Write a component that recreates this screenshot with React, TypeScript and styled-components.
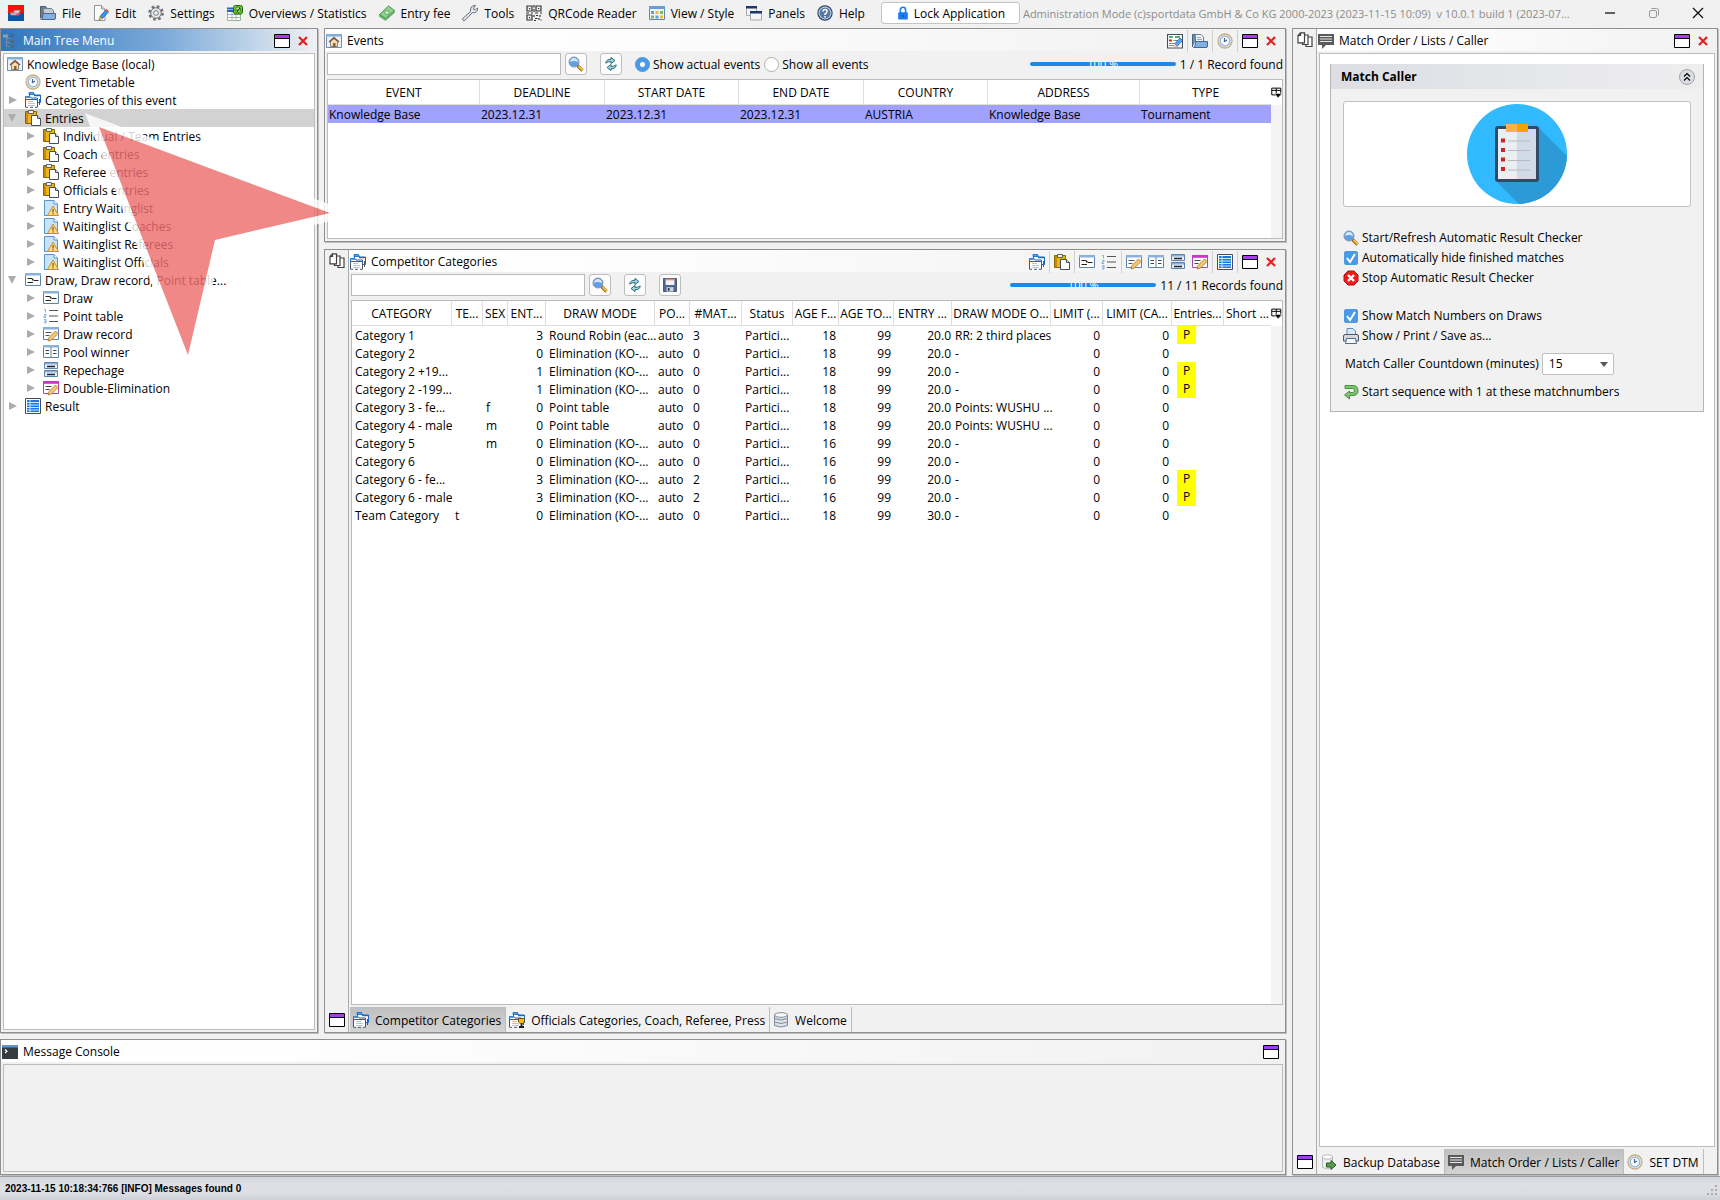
import React from "react";
import styled, { createGlobalStyle, css } from "styled-components";

const GlobalStyle = createGlobalStyle`
  * { box-sizing: border-box; }
  body { margin: 0; background: #f1f1f1; }
  body, button, input, select, table {
    font-family: "Open Sans", "Noto Sans", sans-serif;
    font-size: 12px;
    line-height: 18px;
    color: #000;
  }
  button { border: 0; padding: 0; background: none; text-align: left; white-space: nowrap; }
`;

/* ---------- icons ---------- */

const folderPair = (
  <>
    <path d="M4.500 4V1.500h3.500l1 1.500h6.500v7.500h-2.500" fill="#fff" stroke="#1b66c0" />
    <path d="M4 .5h4.500l1 2H4z" fill="#42a5f5" stroke="#1565c0" strokeWidth=".8" />
    <path d="M9 3h7v1.200H9z" fill="#1565c0" />
    <path d="M.5 15V7.500h12V15" fill="#fff" stroke="#46566c" />
    <path d="M.5 7.500V4.500H5l1 1.500h6.500v1.500z" fill="#fff" stroke="#1565c0" />
    <path d="M.5 4.500H5l1 1.500H.5z" fill="#42a5f5" />
    <path d="M3 9.500h5M3 11.500h7M3 13.500h7" stroke="#b8c4d6" />
    <path d="M.5 15.300h2.500M5 15.300h3M10 15.300h2.500" stroke="#46566c" />
    <path d="M14.500 7v6" stroke="#46566c" />
  </>
);

const drawings: Record<string, React.ReactNode> = {
  logo: (<><rect width="16" height="8" fill="#fb1008" /><rect y="8" width="16" height="8" fill="#0a55a8" /><path d="M1.500 8.500L4 6.500h1.500L6.500 5H13l-2 3 2 .5-3 2H3z" fill="#a9707a" /><path d="M6.500 5.500H12l-1.500 2.500H6zM3 8.500h6l-1 1.200H3z" fill="#dbc4c4" /></>),
  file: (<><path d="M.5 13.500V1.500h5l1.500 2h4v4" fill="#6f7c8b" stroke="#4f5d6b" /><path d="M3.500 3.500h8l2 2v5h-10z" fill="#c3cbd4" stroke="#6f7c8b" /><path d="M.8 14.500q1.500 0 1.700-1.500l.5-4.500h12.500V13q0 1.500-1.500 1.500z" fill="#86aede" stroke="#44699a" /></>),
  edit: (<><path d="M1.500.5h7l3.500 3.500v11.500H1.500z" fill="#fff" stroke="#8f9499" /><path d="M8.500.5V4H12" fill="#ddd" stroke="#8f9499" /><path d="M7 11.500L12.500 5l2.500 2.500-5.500 6z" fill="#2f97ee" stroke="#174f96" strokeWidth=".7" /><path d="M6 15l1-3.500 2.500 2z" fill="#f2d06a" stroke="#8a5b16" strokeWidth=".6" /><path d="M12.500 5l1-1.200 2.500 2.400-1 1.300z" fill="#e0542c" /></>),
  gear: (<><circle cx="8" cy="8" r="6.500" fill="none" stroke="#6e7378" strokeWidth="2.600" strokeDasharray="2.600 2.500" /><circle cx="8" cy="8" r="5.300" fill="#e3e5e7" stroke="#6e7378" /><circle cx="8" cy="8" r="2.300" fill="#fff" stroke="#6e7378" /></>),
  overview: (<><path d="M.5 4.500h13v11H.5z" fill="#fff" stroke="#9db39a" /><path d="M1 9.500h12M1 12.500h12M5 5v10M9 5v10" stroke="#a6b6a6" /><path d="M0 2.500h6v1.500H0zM0 5h6v2H0z" fill="#2667b8" /><rect x="6.500" y=".5" width="9" height="8.500" rx="2" fill="#6fc62d" stroke="#1f6b10" /><circle cx="11" cy="4.800" r="2.800" fill="#b7ec7d" stroke="#2e7911" strokeWidth=".8" /><path d="M9.500 4.500l1.200 1.500 2.300-3" fill="none" stroke="#14470a" strokeWidth="1.200" /></>),
  money: (<><path d="M.5 9.500l9-8.500 6 4.500-9 8z" fill="#8fcf8c" stroke="#4a9a4e" /><path d="M.5 9.500v2l6 4 9-8V5.500l-9 8z" fill="#6db56c" stroke="#4a9a4e" strokeWidth=".6" /><ellipse cx="8" cy="7.500" rx="2.400" ry="1.900" fill="#cdebca" stroke="#4a9a4e" strokeWidth=".7" /></>),
  wrench: (<path d="M1 13.300L8.500 6.500Q8 2.500 10.500 1q1.500-.8 3-.4L11.500 3l.3 1.500 1.700.3 2-2q.7 2-.9 3.900-1.600 1.500-4.300 1L3 15.300q-1 .7-2-.2t0-1.800z" fill="#e3e9f2" stroke="#666c72" />),
  qr: (<><path d="M1 1h5v5H1zM10 1h5v5h-5zM1 10h5v5H1z" fill="none" stroke="#333" strokeWidth="1.200" /><path d="M3 3h1.200v1.200H3zM12 3h1.200v1.200H12zM3 12h1.200v1.200H3z" fill="#333" /><path d="M8 0v2.500M8 4v3M0 8h3M5 8h2M9 8h3M14 8h2M8 10v2M10 10.500h2M14 10v2M9 13.500h2.500M13 13v2M8 15.500h2M15 14.500v1" stroke="#333" strokeWidth="1.200" /></>),
  view: (<><path d="M.5 1.500h15v13H.5z" fill="#eef4fb" stroke="#5f87b5" /><path d="M0 1h16v3H0z" fill="#6a9bd3" /><path d="M2 6h3v3H2zM6.500 10.500h3v3h-3z" fill="#5aa0e0" /><path d="M6.500 6h3v3h-3zM11 10.500h3v3h-3z" fill="#f0b64d" /><path d="M11 6h3v3h-3zM2 10.500h3v3H2z" fill="#7fbb52" /></>),
  panels: (<><path d="M.5 1.500h10v9H.5z" fill="#f4f4f4" stroke="#aaa" /><path d="M0 1h11v2.500H0z" fill="#19396c" /><path d="M4.500 6.500h11v8.500h-11z" fill="#f4f4f4" stroke="#aaa" /><path d="M4 6h12v2.500H4z" fill="#19396c" /></>),
  help: (<><circle cx="8" cy="8" r="7.700" fill="#2b4468" /><circle cx="8" cy="8" r="6.500" fill="#d5dde8" /><circle cx="8" cy="8" r="5.500" fill="#5578aa" /><path d="M6 6.500q0-2 2-2t2 1.700T8 9v1M8 11v1.500" fill="none" stroke="#fff" strokeWidth="1.500" /></>),
  lock: (<><path d="M5 8V4.500q0-3 3-3t3 3V8" fill="none" stroke="#1a7cf0" strokeWidth="1.800" /><rect x="2.500" y="7" width="11" height="8.500" rx="1" fill="#1a7cf0" /><path d="M8 10v3" stroke="#0b3f8c" /></>),
  tree: (<><path d="M4.500 3v10.500M4.500 5.500H8M4.500 9.500H8M4.500 13.500H8" fill="none" stroke="#7d8c9c" /><path d="M1 1.500h5v3H1z" fill="#8ba0b6" /><path d="M8 1h4v3H8zM8 7h4.500v3H8zM8 12h4.500v3H8z" fill="#4a6887" /></>),
  home: (<><path d="M.5 1.500h15v13H.5z" fill="#e8f1f9" stroke="#6d8db3" /><path d="M0 1h16v2.500H0z" fill="#85add9" /><path d="M4.500 8.500v5h7v-5L8 5.500z" fill="#f3dfae" stroke="#94806c" /><path d="M3 9l5-4.300L13 9" fill="none" stroke="#7b4a38" strokeWidth="1.300" /><path d="M7 10h2.500v4H7z" fill="#8a5f32" /></>),
  clock: (<><circle cx="8" cy="8" r="7" fill="#e4e9ee" stroke="#c9ae7e" strokeWidth="1.300" /><circle cx="8" cy="8" r="4.800" fill="#f7fbff" stroke="#8fb3d6" strokeWidth="1.200" /><path d="M7.500 5v3.500L10 7" fill="none" stroke="#46658a" strokeWidth="1.200" /></>),
  folders: folderPair,
  trophyFolders: (<>{folderPair}<path d="M9.500 6.500h6v3.500l-2 1.500h-2l-2-1.500z" fill="#f3bc14" stroke="#4d3800" strokeWidth=".8" /><path d="M12.500 11.500v3M10 15h5" stroke="#1d1d1d" strokeWidth="1.800" /></>),
  paste: (<><path d="M.5 1.500h11v12H.5z" fill="#f0b21b" stroke="#8a6508" /><path d="M1 2h2v11H1z" fill="#c98a08" /><path d="M3.500.5h5v3h-5z" fill="#e9eef2" stroke="#4b5a68" strokeWidth=".9" /><path d="M6.500 5.500h6l3 3v7h-9z" fill="#fff" stroke="#434d5c" /><path d="M12.500 5.500v3h3" fill="#dfe5ec" stroke="#434d5c" /></>),
  warn: (<><path d="M1.500.5h9.500l3.500 3.500v11.500h-13z" fill="#c9e3f8" stroke="#5b94c4" /><path d="M11 .5v3.500h3.500" fill="#fff" stroke="#5b94c4" /><path d="M10 6l5.500 9.500h-11z" fill="#ffdc83" stroke="#c98d22" /><path d="M10 9v3.500M10 13.300v1.200" stroke="#7c4d00" strokeWidth="1.200" /></>),
  draw: (<><path d="M.5 1.500h15v12H.5z" fill="#fff" stroke="#5f82ab" /><path d="M0 1h16v2.500H0z" fill="#88b1e0" /><path d="M2.500 6.500H7M2.500 10.500H8M9 8.500h4.500M7.500 6.500v1.500H9" fill="none" stroke="#222" strokeWidth="1.200" /></>),
  points: (<><path d="M6 2.500h9M6 8h9M6 13.500h9" stroke="#555" strokeWidth="1.200" /><path d="M1 1.500h1.500v3M1 6.500h2v1.500H1v1.500h2M1 11.500h2v3.500H1M1 13.300h2" fill="none" stroke="#7fb0e0" /></>),
  record: (<><path d="M.5 1.500h15v12H.5z" fill="#fff" stroke="#5f82ab" /><path d="M0 1h16v2.500H0z" fill="#88b1e0" /><path d="M2.500 6.500h6M2.500 9.500h4" stroke="#555" /><path d="M5 15l1-3.500L12.500 5 15 7.500 8.500 14z" fill="#f6c671" stroke="#a1722a" strokeWidth=".8" /></>),
  double: (<><path d="M.5 1.500h15v12H.5z" fill="#fff" stroke="#a14ba8" /><path d="M0 1h16v2.800H0z" fill="#cb35cf" /><path d="M2.500 6.500h6M2.500 9.500h4" stroke="#444" /><path d="M5 15l1-3.500L12.500 5 15 7.500 8.500 14z" fill="#f6c671" stroke="#a1722a" strokeWidth=".8" /></>),
  pool: (<><path d="M.5 1.500h15v12H.5z" fill="#fff" stroke="#5f82ab" /><path d="M0 1h16v2.500H0z" fill="#88b1e0" /><path d="M8 3v10" stroke="#5f82ab" /><path d="M2.500 6.500h3.500M2.500 9.500h3.500M10 6.500h3.500M10 9.500h3.500" stroke="#444" /></>),
  repechage: (<><path d="M1.500.5h13v6h-13zM1.500 8.500h13v6h-13z" fill="#e8f0fa" stroke="#5f82ab" /><path d="M2 1h12v1.500H2zM2 9h12v1.500H2z" fill="#88b1e0" /><path d="M4 4.500h8M4 12.500h8" stroke="#222" strokeWidth="1.600" /></>),
  result: (<><path d="M.5.5h15v15H.5z" fill="#fff" stroke="#444c60" /><path d="M2 2h12v12H2z" fill="#1779e0" /><path d="M2 4.500h12M2 7h12M2 9.500h12M2 12h12M5 2v12" stroke="#cfe5fb" /></>),
  formEdit: (<><path d="M.5 1.500h15v13.500H.5z" fill="#fff" stroke="#3f4d5b" strokeWidth="1.200" /><path d="M2 4h4M8 4h5" stroke="#1e9a38" strokeWidth="1.600" /><path d="M2 7.500h3" stroke="#d22" strokeWidth="2" /><path d="M6.500 7.500h6M2 10.500h8M2 12.500h5" stroke="#7d8893" /><path d="M8 10.500L13 5l2.500 2.500-5.500 6z" fill="#58a6ee" stroke="#1e4f96" strokeWidth=".7" /><path d="M7 14l1-3.500 2 2.500z" fill="#f2b06a" /></>),
  open: (<><path d="M.5 14V1.500h4l1 2" fill="#6a8fbd" stroke="#44617f" /><path d="M3.500 1.500h5.500l2.500 2.500v6h-8z" fill="#f1f4f7" stroke="#727d88" /><path d="M5 4.500h4M5 6.500h5" stroke="#9aa5b0" /><path d="M1.500 14.500q1.300 0 1.500-1.500l.5-4.500h12V13q0 1.500-1.500 1.500z" fill="#86b0e2" stroke="#3f689c" /></>),
  chat: (<><path d="M0 1h16v11H8l-4 4v-4H0z" fill="#5a5a5a" /><path d="M2 3.500h12M2 6h12M2 8.500h12" stroke="#e8e8e8" strokeWidth="1.200" /></>),
  copy: (<g fill="#fff" stroke="#3f3f3f" strokeWidth="1.200"><path d="M9 5h6v9.500H9z" /><path d="M5.500 3H11v9.500H5.500z" /><path d="M3.500.8H7.500v10H1V3.500z" /><path d="M3.500.8V3.500H1" fill="none" /></g>),
  max: (<><path d="M.5 1.500h15v13H.5z" fill="#fff" stroke="#000" /><path d="M1 2h14v3H1z" fill="#a63df0" /><path d="M1 5.500h14" stroke="#000" /></>),
  close: (<path d="M4 4l8 8M12 4l-8 8" stroke="#ec1c1c" strokeWidth="2.200" />),
  search: (<><path d="M9.500 9.500l5 5" stroke="#8a6110" strokeWidth="3.200" /><path d="M10.500 10l4.300 4.300" stroke="#f5c04a" strokeWidth="2" /><circle cx="6" cy="6" r="5" fill="#5f9fe6" stroke="#8594b4" /><path d="M2 6Q2.500 2 6 2t4 4Q6 4 2 6z" fill="#d3e8fc" /></>),
  refresh: (<><path d="M2 7q.5-4.500 6-4.500V.5L12.500 4 8 7.500V5.300Q4.500 5 2 7z" fill="#a5d3dc" stroke="#14596e" /><path d="M14 9q-.5 4.500-6 4.500v2L3.500 12 8 8.500v2.200q3.500.3 6-1.700z" fill="#a5d3dc" stroke="#14596e" /></>),
  save: (<><path d="M.5.5h15v15H.5z" fill="#4a6799" stroke="#3a4a68" /><path d="M3 1h10v7H3z" fill="#f3f1f1" /><path d="M3 1.800h10" stroke="#e08a7c" strokeWidth="1.600" /><path d="M4 10.500h8v5H4z" fill="#ccd2da" /><path d="M5.500 11.500h2v3h-2z" fill="#222f48" /></>),
  db: (<><path d="M1.500 3v10.500q6.500 3 13 0V3" fill="#dde3e9" stroke="#818a95" /><ellipse cx="8" cy="3" rx="6.500" ry="2.300" fill="#f6f8fa" stroke="#818a95" /><path d="M1.500 6.500q6.500 3 13 0M1.500 10q6.500 3 13 0" fill="none" stroke="#818a95" /></>),
  backup: (<><path d="M1.500 3v10.500q5 3 10 0V3" fill="#eceeef" stroke="#b5babf" /><ellipse cx="6.500" cy="3" rx="5" ry="2.200" fill="#fafafa" stroke="#b5babf" /><path d="M5.500 9h4.500V6.500l5 4.500-5 4.500V13H5.500z" fill="#5f9a55" stroke="#1f5d16" /></>),
  console: (<><path d="M0 1h16v14H0z" fill="#363b41" /><path d="M0 1h16v2.500H0z" fill="#5e93d2" /><path d="M3 5.500l2 1.700L3 9" fill="none" stroke="#fff" strokeWidth="1.200" /></>),
  stop: (<><path d="M5 1h6l4 4v6l-4 4H5l-4-4V5z" fill="#f01c1c" stroke="#b80e0e" /><path d="M5 5l6 6M11 5l-6 6" stroke="#fff" strokeWidth="2.400" /></>),
  print: (<><path d="M4 7V.5h6l2.500 2.500v4" fill="#d5e9fa" stroke="#5f8fbd" /><path d="M.5 13V8q0-1.500 1.500-1.500h12q1.500 0 1.500 1.500v5z" fill="#d4d8dc" stroke="#4f5a66" /><path d="M3.500 10.500h9l1 5h-11z" fill="#f5fafe" stroke="#4f6d8c" /></>),
  back: (<path d="M2 1.500h8q5 0 5 5t-5 5H6.500v3.500L1.500 11l5-4v1.500h3q2 0 2-2t-2-2H2z" fill="#7cc270" stroke="#3d8a36" strokeWidth=".9" />),
  columns: (<><path d="M1 1.500h12v9H1zM1 4.500h12M7 1.500v9" fill="none" stroke="#000" strokeWidth="1.300" /><path d="M4.500 8.500h10L9.500 14.500z" fill="#000" stroke="#fff" strokeWidth=".8" /></>),
  collapse: (<><circle cx="8" cy="8" r="7.500" fill="#dcdde3" stroke="#a2a3a8" /><path d="M5 7.500l3-3 3 3M5 11.500l3-3 3 3" fill="none" stroke="#000" strokeWidth="1.200" /></>),
  minimize: (<path d="M3 8h10" stroke="#000" strokeWidth="1.200" />),
  restore: (<><rect x="3.500" y="5.500" width="7" height="7" rx="1.500" fill="none" stroke="#999" /><path d="M5.500 3.500h5q2 0 2 2v5" fill="none" stroke="#999" /></>),
  quit: (<path d="M3 3l10 10M13 3L3 13" stroke="#111" strokeWidth="1.300" />),
};

const Glyph = styled.svg<{ $size?: number }>`
  width: ${(p) => p.$size ?? 16}px;
  height: ${(p) => p.$size ?? 16}px;
  flex: none;
  display: block;
`;

const Icon = ({ name, size }: { name: string; size?: number }) => (
  <Glyph $size={size} viewBox="0 0 16 16" aria-hidden="true">{drawings[name]}</Glyph>
);

const Label = styled.span`
  padding-top: 2px;
  white-space: nowrap;
`;

/* ---------- frame ---------- */

const Window = styled.div`
  position: relative;
  min-height: 100vh;
  display: flex;
  flex-direction: column;
  overflow: hidden;
`;

const MenuBar = styled.header`
  display: flex;
  align-items: center;
  height: 28px;
  padding: 0 8px 2px;
  gap: 12px;
`;

const Menus = styled.nav`
  display: flex;
  gap: 12px;
  padding: 0 4px;
`;

const MenuButton = styled.button`
  display: flex;
  align-items: center;
  gap: 6px;
`;

const LockButton = styled.button`
  display: flex;
  align-items: center;
  justify-content: center;
  flex: none;
  gap: 4px;
  width: 139px;
  height: 22px;
  background: #fff;
  border: 1px solid #c4c4c4;
  border-radius: 3px;
`;

const WindowInfo = styled.div`
  flex: 1;
  min-width: 0;
  margin-left: -9px;
  padding-top: 2px;
  color: #8c8c8c;
  font-size: 11px;
  white-space: nowrap;
  overflow: hidden;
`;

const WindowButtons = styled.div`
  display: flex;
  gap: 28px;
  padding-right: 6px;
`;

const Desk = styled.main`
  flex: 1;
  display: flex;
  gap: 6px;
  padding-right: 2px;
`;

const Stack = styled.div<{ $gap: number }>`
  flex: 1;
  min-width: 0;
  display: flex;
  flex-direction: column;
  gap: ${(p) => p.$gap}px;
`;

const Split = styled.div`
  flex: 1;
  display: flex;
  gap: 6px;
`;

const Panel = styled.section<{ $width?: number; $height?: number }>`
  display: flex;
  min-width: 0;
  ${(p) => (p.$width ? css`flex: none; width: ${p.$width}px;` : "")}
  ${(p) => (p.$height ? css`flex: none; height: ${p.$height}px;` : css`flex-grow: 1;`)}
  ${(p) => (p.$width ? css`flex-grow: 0;` : "")}
  border: 1px solid #8f8f8f;
  box-shadow: 1px 1px 0 #bdbdbd;
  background: #f1f1f1;
`;

const PanelMain = styled.div`
  flex: 1;
  min-width: 0;
  display: flex;
  flex-direction: column;
`;

const SideStrip = styled.div`
  flex: none;
  width: 24px;
  display: flex;
  flex-direction: column;
  align-items: center;
  justify-content: space-between;
  padding: 3px 0 4px;
  border-right: 1px solid #ababab;
`;

const TitleBar = styled.div<{ $active?: boolean }>`
  flex: none;
  display: flex;
  align-items: center;
  height: 22px;
  padding: 1px 6px 0 1px;
  color: ${(p) => (p.$active ? "#fff" : "#000")};
  background: ${(p) =>
    p.$active
      ? "linear-gradient(90deg, #2f76bd, #79a8d8 50%, #f0f1f4)"
      : "linear-gradient(90deg, #fff, #fdfdfd 30%, #f1f1f1)"};
`;

const Title = styled.h2`
  flex: 1;
  margin: 0 0 0 5px;
  padding-top: 1px;
  font-size: 12px;
  font-weight: 400;
`;

const Tools = styled.div<{ $gap?: number }>`
  display: flex;
  align-items: center;
  gap: ${(p) => p.$gap ?? 4}px;
`;

const Divider = styled.span`
  width: 1px;
  height: 22px;
  background: #cfcfcf;
`;

const Frame = styled.div<{ $fill?: string }>`
  flex: 1;
  margin: 2px;
  border: 1px solid #bcbcbc;
  background: ${(p) => p.$fill ?? "#fff"};
`;

const WindowTools = () => (
  <Tools $gap={5}>
    <button aria-label="Maximize"><Icon name="max" /></button>
    <button aria-label="Close"><Icon name="close" /></button>
  </Tools>
);

/* ---------- tree ---------- */

const TreeList = styled.ul`
  list-style: none;
  margin: 0;
  padding: 1px 0;
`;

const TreeRow = styled.li<{ $selected?: boolean }>`
  background: ${(p) => (p.$selected ? "#d2d2d2" : "transparent")};
`;

const TreeButton = styled.button<{ $level: number }>`
  display: flex;
  align-items: center;
  width: 100%;
  height: 18px;
  gap: 4px;
  padding-left: ${(p) => [3, 3, 21][p.$level]}px;
`;

const Twisty = styled.span<{ $state: "open" | "closed" | "none" }>`
  width: 14px;
  display: flex;
  padding-left: ${(p) => (p.$state === "closed" ? 2 : 1)}px;
  &::before {
    content: "";
    border: 4px solid transparent;
    ${(p) => p.$state === "closed" && css`border-left: 8px solid #acacac; border-right: 0;`}
    ${(p) => p.$state === "open" && css`border-top: 8px solid #acacac; border-bottom: 0;`}
  }
`;

type Node = { text: string; icon: string; level: number; state: "open" | "closed" | "none" };
const n = (text: string, icon: string, level: number, state: Node["state"] = "closed"): Node => ({ text, icon, level, state });
const nodes: Node[] = [
  n("Knowledge Base (local)", "home", 0, "none"),
  n("Event Timetable", "clock", 1, "none"),
  n("Categories of this event", "folders", 1),
  n("Entries", "paste", 1, "open"),
  n("Individual / Team Entries", "paste", 2),
  n("Coach entries", "paste", 2),
  n("Referee entries", "paste", 2),
  n("Officials entries", "paste", 2),
  n("Entry Waitinglist", "warn", 2),
  n("Waitinglist Coaches", "warn", 2),
  n("Waitinglist Referees", "warn", 2),
  n("Waitinglist Officials", "warn", 2),
  n("Draw, Draw record, Point table...", "draw", 1, "open"),
  n("Draw", "draw", 2),
  n("Point table", "points", 2),
  n("Draw record", "record", 2),
  n("Pool winner", "pool", 2),
  n("Repechage", "repechage", 2),
  n("Double-Elimination", "double", 2),
  n("Result", "result", 1),
];

const Pointer = styled.svg`
  position: absolute;
  left: 70px;
  top: 100px;
  width: 300px;
  height: 300px;
  pointer-events: none;
`;

/* ---------- search bars and tables ---------- */

const SearchBar = styled.div`
  flex: none;
  display: flex;
  align-items: center;
  height: 28px;
  padding: 0 2px 2px;
`;

const SearchInput = styled.input`
  width: 234px;
  height: 22px;
  margin-right: 4px;
  border: 1px solid #b9b9b9;
  background: #fff;
`;

const ToolButton = styled.button`
  display: flex;
  align-items: center;
  justify-content: center;
  width: 22px;
  height: 22px;
  margin-right: 13px;
  background: #fcfcfc;
  border: 1px solid #bdbdbd;
  border-radius: 3px;
`;

const RadioLabel = styled.label`
  display: flex;
  align-items: center;
  gap: 3px;
  margin-right: 4px;
  white-space: nowrap;
`;

const Radio = styled.input`
  appearance: none;
  width: 15px;
  height: 15px;
  margin: 0;
  border: 1px solid #b0b0b0;
  border-radius: 50%;
  background: #fff;
  &:checked { border: 5px solid #4b9ae6; }
`;

const Progress = styled.div`
  width: 146px;
  height: 4px;
  margin: 0 4px 0 auto;
  overflow: hidden;
  border-radius: 2px;
  background: #1e88e5;
  color: #fff;
  font-size: 11px;
  line-height: 4px;
  text-align: center;
`;

const Grid = styled(Frame)`
  display: flex;
  align-items: stretch;
  margin: 0 2px 2px;
  min-width: 0;
`;

const TableArea = styled.div`
  flex: 1;
  min-width: 0;
`;

const Table = styled.table`
  width: 100%;
  table-layout: fixed;
  border-collapse: separate;
  border-spacing: 0;
`;

const HeadCell = styled.th`
  height: 25px;
  padding: 1px 0 0;
  font-weight: 400;
  white-space: nowrap;
  border-right: 1px solid #dedede;
  border-bottom: 1px solid #dedede;
`;

const Cell = styled.td<{ $right?: boolean; $pad?: number }>`
  height: 18px;
  padding: 1px ${(p) => p.$pad ?? 3}px 0;
  line-height: 17px;
  text-align: ${(p) => (p.$right ? "right" : "left")};
  white-space: nowrap;
`;

const MarkCell = styled(Cell)`
  padding: 0 5px;
`;

const SelectedRow = styled.tr`
  background: #a1a1ff;
`;

const Gutter = styled.div`
  flex: none;
  width: 11px;
  background: #f4f4f4;
`;

const GutterButton = styled.button`
  display: flex;
  align-items: center;
  justify-content: center;
  width: 11px;
  height: 25px;
  background: #fff;
`;

const Mark = styled.span`
  display: block;
  width: 19px;
  background: #ff0;
  line-height: 18px;
  text-align: center;
`;

const eventCols: [string, number][] = [
  ["EVENT", 152], ["DEADLINE", 125], ["START DATE", 134], ["END DATE", 125],
  ["COUNTRY", 124], ["ADDRESS", 152], ["TYPE", 132],
];
const eventRow = ["Knowledge Base", "2023.12.31", "2023.12.31", "2023.12.31", "AUSTRIA", "Knowledge Base", "Tournament"];

const catCols: [string, number, boolean?, number?][] = [
  ["CATEGORY", 100], ["TE...", 31], ["SEX", 25], ["ENT...", 38, true], ["DRAW MODE", 109],
  ["PO...", 35], ["#MAT...", 52], ["Status", 51], ["AGE F...", 46, true], ["AGE TO...", 55, true],
  ["ENTRY ...", 58, true, 1], ["DRAW MODE O...", 99], ["LIMIT (...", 52, true], ["LIMIT (CA...", 69, true],
  ["Entries...", 52], ["Short ...", 48],
];

const ko = "Elimination (KO-...";
const c = (name: string, team: string, sex: string, ent: string, mode: string, matches: string, age: string, fee: string, opt: string, p: string) =>
  [name, team, sex, ent, mode, "auto", matches, "Partici...", age, "99", fee, opt, "0", "0", p, ""];
const catRows = [
  c("Category 1", "", "", "3", "Round Robin (eac...", "3", "18", "20.0", "RR: 2 third places", "P"),
  c("Category 2", "", "", "0", ko, "0", "18", "20.0", "-", ""),
  c("Category 2 +19...", "", "", "1", ko, "0", "18", "20.0", "-", "P"),
  c("Category 2 -199...", "", "", "1", ko, "0", "18", "20.0", "-", "P"),
  c("Category 3 - fe...", "", "f", "0", "Point table", "0", "18", "20.0", "Points: WUSHU ...", ""),
  c("Category 4 - male", "", "m", "0", "Point table", "0", "18", "20.0", "Points: WUSHU ...", ""),
  c("Category 5", "", "m", "0", ko, "0", "16", "20.0", "-", ""),
  c("Category 6", "", "", "0", ko, "0", "16", "20.0", "-", ""),
  c("Category 6 - fe...", "", "", "3", ko, "2", "16", "20.0", "-", "P"),
  c("Category 6 - male", "", "", "3", ko, "2", "16", "20.0", "-", "P"),
  c("Team Category", "t", "", "0", ko, "0", "18", "30.0", "-", ""),
];

/* ---------- tabs ---------- */

const Tabs = styled.div`
  flex: none;
  display: flex;
  height: 25px;
  padding-left: 1px;
`;

const Tab = styled.button<{ $active?: boolean }>`
  display: flex;
  align-items: center;
  gap: 6px;
  padding: 0 4px 0 3px;
  border-right: 1px solid #bdbdbd;
  background: ${(p) => (p.$active ? "linear-gradient(#bfbfbf, #d3d3d3)" : "none")};
`;

/* ---------- match caller ---------- */

const Caller = styled.div`
  margin: 10px;
  border: 1px solid #b5b5b5;
  border-top: 0;
  background: #f1f1f1;
`;

const CallerHead = styled.div`
  display: flex;
  align-items: center;
  justify-content: space-between;
  height: 25px;
  padding: 0 8px 0 10px;
  background: linear-gradient(90deg, #dcdee4, #eeeeef);
`;

const CallerTitle = styled.h3`
  margin: 0;
  font-size: 12px;
  font-weight: 700;
`;

const CallerBody = styled.div`
  padding: 12px 12px 9px;
`;

const BigButton = styled.button`
  display: flex;
  align-items: center;
  justify-content: center;
  width: 100%;
  height: 106px;
  margin-bottom: 21px;
  border: 1px solid #c3c3c3;
  border-radius: 3px;
  background: #fff;
`;

const Line = styled.div<{ $after?: number }>`
  display: flex;
  align-items: center;
  height: 20px;
  margin-bottom: ${(p) => p.$after ?? 0}px;
`;

const Action = styled.button`
  display: flex;
  align-items: center;
  gap: 3px;
`;

const CheckLabel = styled.label`
  display: flex;
  align-items: center;
  gap: 4px;
`;

const Tick = styled.span`
  position: relative;
  display: flex;
  margin-left: 1px;
  svg { position: absolute; pointer-events: none; }
`;

const CheckBox = styled.input`
  appearance: none;
  width: 14px;
  height: 14px;
  margin: 0;
  border: 1px solid #b0b0b0;
  border-radius: 2px;
  background: #fff;
  &:checked { border-color: #4b9ae6; background: #4b9ae6; }
`;

const SelectWrap = styled.span`
  position: relative;
  margin-left: 3px;
  &::after {
    content: "";
    position: absolute;
    right: 6px;
    top: 9px;
    border: 4px solid transparent;
    border-top: 5px solid #5a5a5a;
    border-bottom: 0;
    pointer-events: none;
  }
`;

const Select = styled.select`
  appearance: none;
  display: block;
  width: 72px;
  height: 22px;
  padding: 0 6px;
  border: 1px solid #c0c0c0;
  border-radius: 2px;
  background: #fff;
`;

const CountLabel = styled.label`
  display: flex;
  align-items: center;
  padding-left: 2px;
  white-space: nowrap;
`;

const Check = ({ text }: { text: string }) => (
  <CheckLabel>
    <Tick>
      <CheckBox type="checkbox" defaultChecked />
      <Glyph $size={14} viewBox="0 0 14 14"><path d="M3 7l3 4 5-8" fill="none" stroke="#fff" strokeWidth="2" /></Glyph>
    </Tick>
    {text}
  </CheckLabel>
);

const StatusBar = styled.footer`
  flex: none;
  display: flex;
  align-items: center;
  justify-content: space-between;
  height: 24px;
  margin-top: 1px;
  padding: 0 2px 0 5px;
  border-top: 1px solid #9c9c9c;
  background: linear-gradient(#d3d5db, #dfe0e6 30%, #dcdee4 70%, #cfd1d8);
  font: 700 10px "Liberation Sans", Arial, sans-serif;
`;

const menus: [string, string][] = [
  ["file", "File"], ["edit", "Edit"], ["gear", "Settings"], ["overview", "Overviews / Statistics"],
  ["money", "Entry fee"], ["wrench", "Tools"], ["qr", "QRCode Reader"], ["view", "View / Style"],
  ["panels", "Panels"], ["help", "Help"],
];

const ColumnsButton = () => (
  <Gutter><GutterButton aria-label="Choose columns"><Icon name="columns" size={12} /></GutterButton></Gutter>
);

export default function App() {
  return (
    <Window>
      <GlobalStyle />
      <MenuBar>
        <Icon name="logo" />
        <Menus>
          {menus.map(([icon, text]) => (
            <MenuButton key={text}><Icon name={icon} /><Label>{text}</Label></MenuButton>
          ))}
        </Menus>
        <LockButton><Icon name="lock" size={14} /><Label>Lock Application</Label></LockButton>
        <WindowInfo>Administration Mode (c)sportdata GmbH &amp; Co KG 2000-2023 (2023-11-15 10:09)&nbsp; v 10.0.1 build 1 (2023-07...</WindowInfo>
        <WindowButtons>
          <button aria-label="Minimize"><Icon name="minimize" /></button>
          <button aria-label="Restore"><Icon name="restore" /></button>
          <button aria-label="Quit"><Icon name="quit" /></button>
        </WindowButtons>
      </MenuBar>

      <Desk>
        <Stack $gap={6}>
          <Split>
            <Panel $width={318}>
              <PanelMain>
                <TitleBar $active>
                  <Icon name="tree" />
                  <Title>Main Tree Menu</Title>
                  <WindowTools />
                </TitleBar>
                <Frame>
                  <TreeList>
                    {nodes.map((node) => (
                      <TreeRow key={node.text} $selected={node.text === "Entries"}>
                        <TreeButton $level={node.level}>
                          {node.level > 0 && <Twisty $state={node.state} />}
                          <Icon name={node.icon} />
                          <Label>{node.text}</Label>
                        </TreeButton>
                      </TreeRow>
                    ))}
                  </TreeList>
                </Frame>
              </PanelMain>
            </Panel>

            <Stack $gap={7}>
              <Panel $height={214}>
                <PanelMain>
                  <TitleBar>
                    <Icon name="home" />
                    <Title>Events</Title>
                    <Tools>
                      <button aria-label="Edit event"><Icon name="formEdit" /></button>
                      <Divider />
                      <button aria-label="Open event"><Icon name="open" /></button>
                      <Divider />
                      <button aria-label="Timetable"><Icon name="clock" /></button>
                      <Divider />
                      <WindowTools />
                    </Tools>
                  </TitleBar>
                  <SearchBar>
                    <SearchInput aria-label="Search events" />
                    <ToolButton aria-label="Search"><Icon name="search" /></ToolButton>
                    <ToolButton aria-label="Refresh"><Icon name="refresh" size={14} /></ToolButton>
                    <RadioLabel><Radio type="radio" name="scope" defaultChecked /><Label>Show actual events</Label></RadioLabel>
                    <RadioLabel><Radio type="radio" name="scope" /><Label>Show all events</Label></RadioLabel>
                    <Progress>100 %</Progress>
                    <Label>1 / 1 Record found</Label>
                  </SearchBar>
                  <Grid>
                    <TableArea>
                      <Table>
                        <colgroup>{eventCols.map(([t, w]) => <col key={t} width={w} />)}</colgroup>
                        <thead><tr>{eventCols.map(([t]) => <HeadCell key={t}>{t}</HeadCell>)}</tr></thead>
                        <tbody><SelectedRow>{eventRow.map((t, i) => <Cell key={i} $pad={1}>{t}</Cell>)}</SelectedRow></tbody>
                      </Table>
                    </TableArea>
                    <ColumnsButton />
                  </Grid>
                </PanelMain>
              </Panel>

              <Panel>
                <SideStrip>
                  <button aria-label="Detach"><Icon name="copy" /></button>
                  <button aria-label="Maximize"><Icon name="max" /></button>
                </SideStrip>
                <PanelMain>
                  <TitleBar>
                    <Icon name="folders" />
                    <Title>Competitor Categories</Title>
                    <Tools>
                      <button aria-label="Categories"><Icon name="folders" /></button>
                      <Divider />
                      <button aria-label="Entries"><Icon name="paste" /></button>
                      <Divider />
                      <Tools $gap={6}>
                        <button aria-label="Draw"><Icon name="draw" /></button>
                        <button aria-label="Point table"><Icon name="points" /></button>
                      </Tools>
                      <Divider />
                      <Tools $gap={6}>
                        <button aria-label="Draw record"><Icon name="record" /></button>
                        <button aria-label="Pool winner"><Icon name="pool" /></button>
                        <button aria-label="Repechage"><Icon name="repechage" /></button>
                        <button aria-label="Double-Elimination"><Icon name="double" /></button>
                      </Tools>
                      <Divider />
                      <button aria-label="Result"><Icon name="result" /></button>
                      <Divider />
                      <WindowTools />
                    </Tools>
                  </TitleBar>
                  <SearchBar>
                    <SearchInput aria-label="Search categories" />
                    <ToolButton aria-label="Search"><Icon name="search" /></ToolButton>
                    <ToolButton aria-label="Refresh"><Icon name="refresh" size={14} /></ToolButton>
                    <ToolButton aria-label="Save"><Icon name="save" size={14} /></ToolButton>
                    <Progress>100 %</Progress>
                    <Label>11 / 11 Records found</Label>
                  </SearchBar>
                  <Grid>
                    <TableArea>
                      <Table>
                        <colgroup>{catCols.map(([t, w]) => <col key={t} width={w} />)}</colgroup>
                        <thead><tr>{catCols.map(([t]) => <HeadCell key={t}>{t}</HeadCell>)}</tr></thead>
                        <tbody>
                          {catRows.map((row) => (
                            <tr key={row[0]}>
                              {row.map((t, i) =>
                                i === 14 && t ? (
                                  <MarkCell key={i}><Mark>{t}</Mark></MarkCell>
                                ) : (
                                  <Cell key={i} $right={catCols[i][2]} $pad={catCols[i][3]}>{t}</Cell>
                                )
                              )}
                            </tr>
                          ))}
                        </tbody>
                      </Table>
                    </TableArea>
                    <ColumnsButton />
                  </Grid>
                  <Tabs>
                    <Tab $active><Icon name="folders" /><Label>Competitor Categories</Label></Tab>
                    <Tab><Icon name="trophyFolders" /><Label>Officials Categories, Coach, Referee, Press</Label></Tab>
                    <Tab><Icon name="db" /><Label>Welcome</Label></Tab>
                  </Tabs>
                </PanelMain>
              </Panel>
            </Stack>
          </Split>

          <Panel $height={136}>
            <PanelMain>
              <TitleBar>
                <Icon name="console" />
                <Title>Message Console</Title>
                <button aria-label="Maximize"><Icon name="max" /></button>
              </TitleBar>
              <Frame $fill="#f1f1f1" />
            </PanelMain>
          </Panel>
        </Stack>

        <Panel $width={426}>
          <SideStrip>
            <button aria-label="Detach"><Icon name="copy" /></button>
            <button aria-label="Maximize"><Icon name="max" /></button>
          </SideStrip>
          <PanelMain>
            <TitleBar>
              <Icon name="chat" />
              <Title>Match Order / Lists / Caller</Title>
              <WindowTools />
            </TitleBar>
            <Frame>
              <Caller>
                <CallerHead>
                  <CallerTitle>Match Caller</CallerTitle>
                  <button aria-label="Collapse"><Icon name="collapse" /></button>
                </CallerHead>
                <CallerBody>
                  <BigButton aria-label="Match caller">
                    <Glyph $size={100} viewBox="0 0 100 100">
                      <circle cx="50" cy="50" r="50" fill="#31baff" />
                      <path d="M72 24L100 52A50 50 0 0 1 52 100L29 77z" fill="#2b9ad6" />
                      <rect x="28" y="22" width="44" height="56" rx="3" fill="#324a63" />
                      <path d="M31 25h19v50H31z" fill="#e9eff3" />
                      <path d="M50 25h19v50H50z" fill="#d0dbe7" />
                      <path d="M39 20h11v8H39z" fill="#fbb24c" />
                      <path d="M50 20h11v8H50z" fill="#f6a106" />
                      <path d="M41 37h22M41 46.500h22M41 56.500h22M41 66h22" stroke="#b9b9bd" />
                      <path d="M34 34.500h4v4h-4zM34 44h4v4h-4zM34 53.500h4v4h-4zM34 63h4v4h-4z" fill="#cf2424" />
                    </Glyph>
                  </BigButton>
                  <Line><Action><Icon name="search" />Start/Refresh Automatic Result Checker</Action></Line>
                  <Line><Check text="Automatically hide finished matches" /></Line>
                  <Line $after={18}><Action><Icon name="stop" />Stop Automatic Result Checker</Action></Line>
                  <Line><Check text="Show Match Numbers on Draws" /></Line>
                  <Line $after={8}><Action><Icon name="print" />Show / Print / Save as...</Action></Line>
                  <Line $after={8}>
                    <CountLabel>
                      Match Caller Countdown (minutes)
                      <SelectWrap><Select defaultValue="15"><option>15</option></Select></SelectWrap>
                    </CountLabel>
                  </Line>
                  <Line><Action><Icon name="back" />Start sequence with 1 at these matchnumbers</Action></Line>
                </CallerBody>
              </Caller>
            </Frame>
            <Tabs>
              <Tab><Icon name="backup" /><Label>Backup Database</Label></Tab>
              <Tab $active><Icon name="chat" /><Label>Match Order / Lists / Caller</Label></Tab>
              <Tab><Icon name="clock" /><Label>SET DTM</Label></Tab>
            </Tabs>
          </PanelMain>
        </Panel>
      </Desk>

      <StatusBar>
        2023-11-15 10:18:34:766 [INFO] Messages found 0
        <Glyph $size={12} viewBox="0 0 12 12">
          <path d="M9 2h2v2H9zM5 6h2v2H5zM9 6h2v2H9zM1 10h2v2H1zM5 10h2v2H5zM9 10h2v2H9z" fill="#b3aca6" />
        </Glyph>
      </StatusBar>

      <Pointer viewBox="70 100 300 300" aria-hidden="true">
        <path d="M99 127L330 213L215 240L188 355z" fill="#ee6e6e" stroke="#fff" strokeWidth="16" strokeMiterlimit="6" paintOrder="stroke" opacity=".82" />
      </Pointer>
    </Window>
  );
}
